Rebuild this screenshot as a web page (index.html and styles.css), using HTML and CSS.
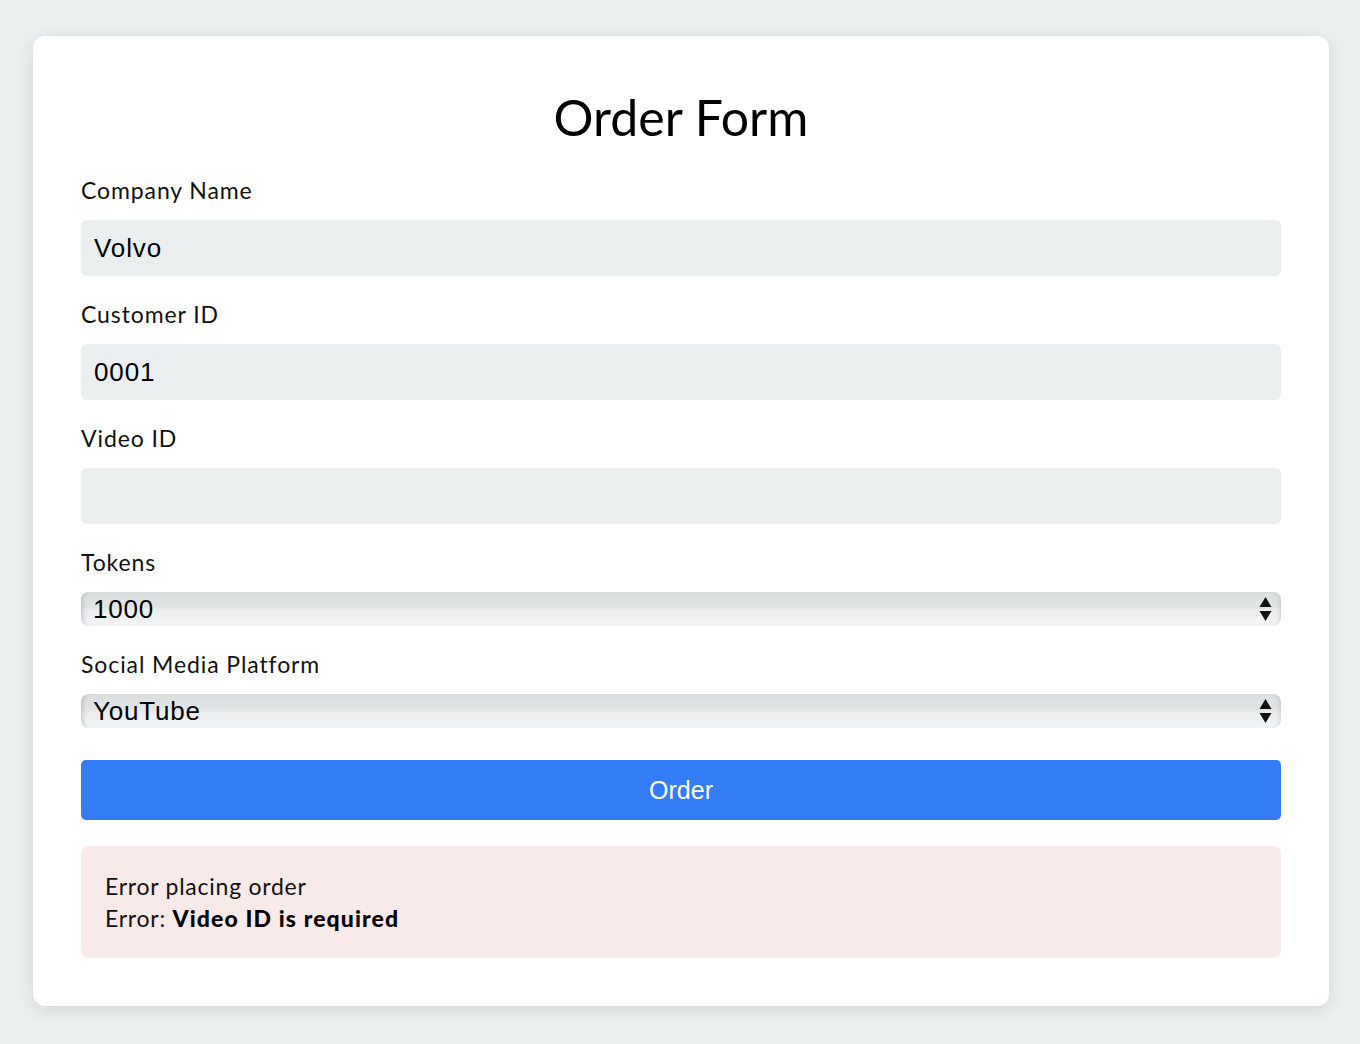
FILE: index.html
```html
<!DOCTYPE html>
<html lang="en">
<head>
<meta charset="utf-8">
<title>Order Form</title>
<link rel="stylesheet" href="styles.css">
</head>
<body>
<main class="card">
  <h1 class="title">Order Form</h1>
  <form class="form">
    <div class="field">
      <label class="label" for="company">Company Name</label>
      <input class="input" id="company" type="text" value="Volvo">
    </div>
    <div class="field">
      <label class="label" for="customer">Customer ID</label>
      <input class="input" id="customer" type="text" value="0001">
    </div>
    <div class="field">
      <label class="label" for="video">Video ID</label>
      <input class="input" id="video" type="text" value="">
    </div>
    <div class="field">
      <label class="label" for="tokens">Tokens</label>
      <div class="select-wrap">
        <select class="select" id="tokens"><option>1000</option></select>
        <svg class="arrows" width="13" height="26" viewBox="0 0 13 26"><path d="M6.5 1 L12.5 11 H0.5 Z" fill="#111"/><path d="M0.5 15 H12.5 L6.5 25 Z" fill="#111"/></svg>
      </div>
    </div>
    <div class="field">
      <label class="label" for="platform">Social Media Platform</label>
      <div class="select-wrap">
        <select class="select" id="platform"><option>YouTube</option></select>
        <svg class="arrows" width="13" height="26" viewBox="0 0 13 26"><path d="M6.5 1 L12.5 11 H0.5 Z" fill="#111"/><path d="M0.5 15 H12.5 L6.5 25 Z" fill="#111"/></svg>
      </div>
    </div>
    <button class="button" type="button">Order</button>
  </form>
  <div class="error">
    <div>Error placing order</div>
    <div>Error: <strong class="strong">Video ID is required</strong></div>
  </div>
</main>
</body>
</html>
```
FILE: styles.css
```css
html, body {
  margin: 0;
  padding: 0;
}
body {
  background: #ebeff0;
  font-family: Lato, "Noto Sans", sans-serif;
  color: #111;
  padding: 36px 31px 38px 33px;
}
.card {
  background: #fff;
  border-radius: 12px;
  box-shadow: 0 4px 18px rgba(0, 0, 0, 0.10);
  padding: 48px;
}
.title {
  margin: 3px 0 27px;
  text-align: center;
  font-size: 50px;
  line-height: 60px;
  font-weight: 400;
  color: #000;
}
.form {
  display: flex;
  flex-direction: column;
}
.field {
  display: flex;
  flex-direction: column;
  margin-bottom: 22px;
}
.label {
  font-size: 23px;
  line-height: 33px;
  letter-spacing: 0.9px;
  margin-bottom: 13px;
  color: #111;
}
.input {
  box-sizing: border-box;
  height: 56px;
  width: 100%;
  border: none;
  border-radius: 6px;
  background: #ebeeef;
  padding: 0 13px;
  font-family: "Liberation Sans", Arial, sans-serif;
  font-size: 26px;
  letter-spacing: 0.9px;
  color: #000;
  outline: none;
}
.select-wrap {
  position: relative;
  height: 34px;
}
.select {
  appearance: none;
  -webkit-appearance: none;
  box-sizing: border-box;
  width: 100%;
  height: 34px;
  border: none;
  border-radius: 8px;
  padding: 0 12px;
  font-family: "Liberation Sans", Arial, sans-serif;
  font-size: 26px;
  letter-spacing: 0.8px;
  color: #000;
  background: linear-gradient(to bottom, #dbdedf 0%, #e2e5e6 45%, #ebedee 55%, #f3f4f5 100%);
  box-shadow: inset 5px 0 4px -3px rgba(0,0,0,0.16), inset -5px 0 4px -3px rgba(0,0,0,0.10);
  outline: none;
}
.arrows {
  position: absolute;
  right: 9px;
  top: 4px;
  pointer-events: none;
}
.button {
  margin-top: 10px;
  height: 60px;
  border: none;
  border-radius: 5px;
  background: #337cf5;
  color: #fff;
  font-family: "Liberation Sans", Arial, sans-serif;
  font-size: 25px;
}
.error {
  margin-top: 26px;
  background: #f9eaea;
  border-radius: 8px;
  padding: 24px 24px 24px;
  font-size: 23px;
  line-height: 32px;
  letter-spacing: 0.75px;
  color: #111;
}
.strong {
  font-weight: 900;
  letter-spacing: 1.1px;
  color: #000;
}
```
